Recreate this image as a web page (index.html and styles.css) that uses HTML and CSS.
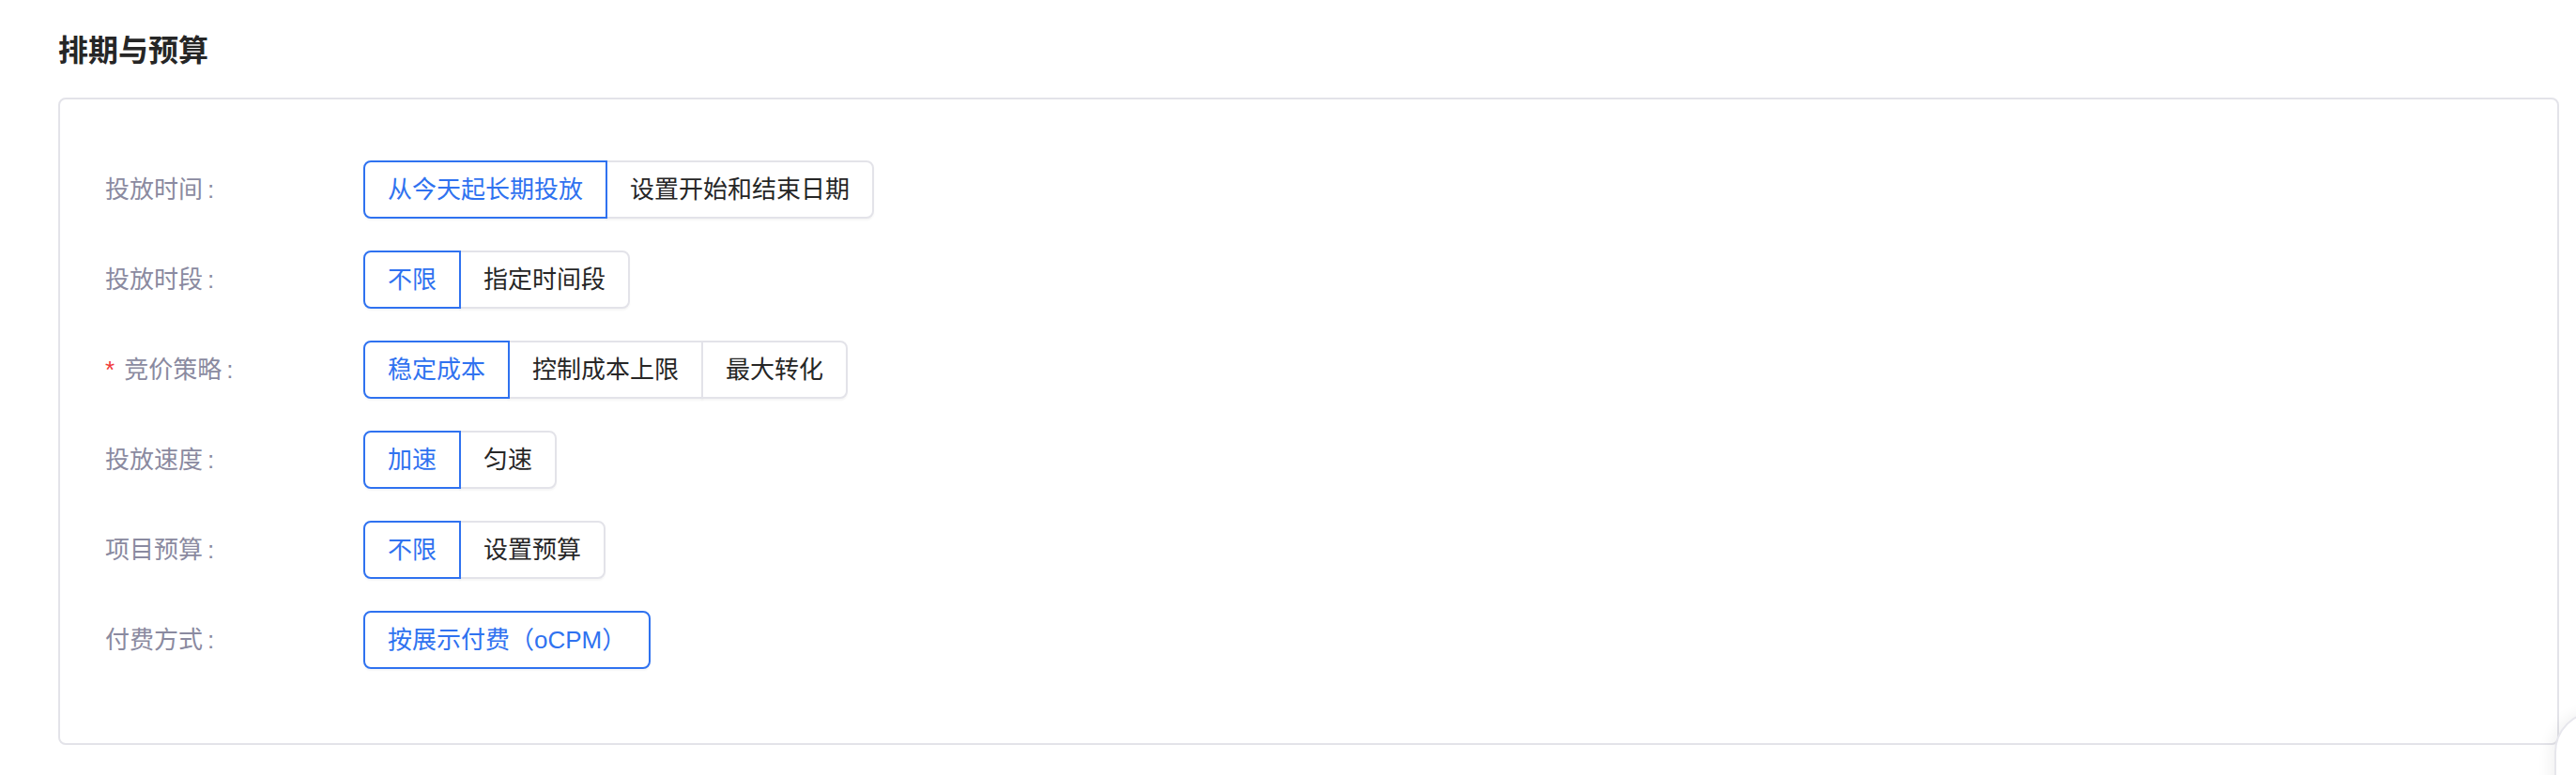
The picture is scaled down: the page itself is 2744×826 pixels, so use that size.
FILE: index.html
```html
<!DOCTYPE html>
<html lang="zh-CN">

<head>
    <meta charset="UTF-8">
    <meta name="viewport" content="width=device-width, initial-scale=1.0">
    <title>排期与预算</title>
    <link rel="stylesheet" href="styles.css">
</head>

<body>
    <div class="page">
        <h2 class="section-title">排期与预算</h2>

        <div class="panel">
            <div class="form-row">
                <div class="form-label">投放时间<span class="colon">:</span></div>
                <div class="seg">
                    <button class="seg-item active">从今天起长期投放</button>
                    <button class="seg-item">设置开始和结束日期</button>
                </div>
            </div>

            <div class="form-row">
                <div class="form-label">投放时段<span class="colon">:</span></div>
                <div class="seg">
                    <button class="seg-item active">不限</button>
                    <button class="seg-item">指定时间段</button>
                </div>
            </div>

            <div class="form-row">
                <div class="form-label"><span class="required">*</span>竞价策略<span class="colon">:</span></div>
                <div class="seg">
                    <button class="seg-item active">稳定成本</button>
                    <button class="seg-item">控制成本上限</button>
                    <button class="seg-item">最大转化</button>
                </div>
            </div>

            <div class="form-row">
                <div class="form-label">投放速度<span class="colon">:</span></div>
                <div class="seg">
                    <button class="seg-item active">加速</button>
                    <button class="seg-item">匀速</button>
                </div>
            </div>

            <div class="form-row">
                <div class="form-label">项目预算<span class="colon">:</span></div>
                <div class="seg">
                    <button class="seg-item active">不限</button>
                    <button class="seg-item">设置预算</button>
                </div>
            </div>

            <div class="form-row">
                <div class="form-label">付费方式<span class="colon">:</span></div>
                <div class="seg">
                    <button class="seg-item active single">按展示付费（oCPM）</button>
                </div>
            </div>
        </div>
    </div>

    <!-- floating helper, mostly off screen -->
    <div class="float-btn"></div>
</body>

</html>
```

FILE: styles.css
```css
:root {
    --primary-color: #2f72f0;
    --title-color: #262626;
    --label-color: #8a8aa0;
    --text-color: #262626;
    --border-color: #e3e3e9;
    --danger-color: #f03a3a;
}

body {
    font-family: "Liberation Sans", "Noto Sans CJK SC", sans-serif;
    color: var(--text-color);
    background-color: #fff;
    margin: 0;
    overflow: hidden;
}

.page {
    padding: 32px 18px 0 62px;
}

.section-title {
    margin: 0 0 28px;
    font-size: 32px;
    line-height: 44px;
    font-weight: 700;
    color: var(--title-color);
}

.panel {
    border: 2px solid var(--border-color);
    border-radius: 8px;
    padding: 65px 48px 79px;
    background-color: #fff;
}

.form-row {
    display: flex;
    align-items: center;
    margin-bottom: 34px;
}

.form-row:last-child {
    margin-bottom: 0;
}

.form-label {
    width: 275px;
    flex-shrink: 0;
    font-size: 26px;
    line-height: 36px;
    color: var(--label-color);
}

.colon {
    margin-left: 5px;
}

.required {
    color: var(--danger-color);
    margin-right: 10px;
}

.seg {
    display: flex;
}

.seg-item {
    position: relative;
    height: 62px;
    padding: 0 24px;
    margin: 0 0 0 -2px;
    font-family: inherit;
    font-size: 26px;
    line-height: 58px;
    color: var(--text-color);
    background-color: #fff;
    border: 2px solid var(--border-color);
    border-radius: 0;
    box-shadow: 0 2px 2px rgba(0, 0, 0, 0.04);
    cursor: pointer;
}

.seg-item:first-child {
    margin-left: 0;
    border-radius: 8px 0 0 8px;
}

.seg-item:last-child {
    border-radius: 0 8px 8px 0;
}

.seg-item.single {
    border-radius: 8px;
}

.seg-item.active {
    z-index: 1;
    color: var(--primary-color);
    border-color: var(--primary-color);
}

.float-btn {
    position: fixed;
    left: 2721px;
    top: 758px;
    width: 120px;
    height: 140px;
    border-radius: 44px;
    background-color: #fff;
    border: 2px solid #e6e6ec;
    box-shadow: -6px 0 14px rgba(0, 0, 0, 0.05);
}
```
